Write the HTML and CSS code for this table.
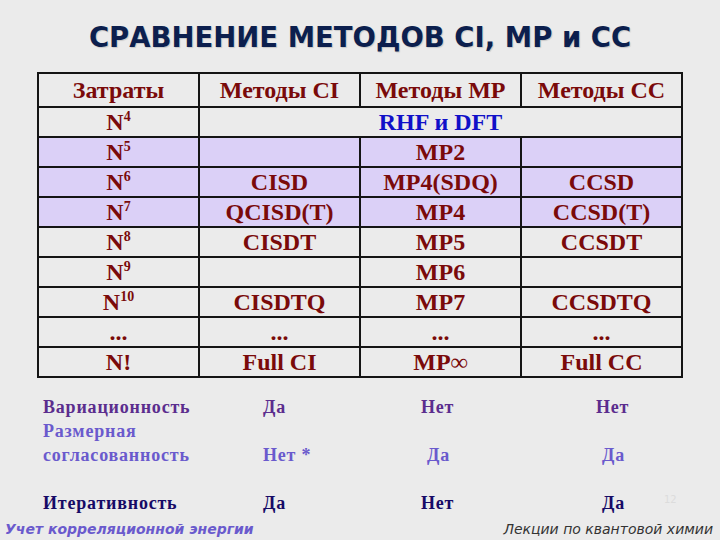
FILE: index.html
```html
<!DOCTYPE html>
<html lang="ru">
<head>
<meta charset="utf-8">
<link rel="stylesheet" href="styles.css">
</head>
<body>
<div class="slide">
  <h1 class="title">СРАВНЕНИЕ МЕТОДОВ CI, MP и CC</h1>
  <table class="cmp">
    <tr class="head">
      <td>Затраты</td><td>Методы CI</td><td>Методы MP</td><td>Методы CC</td>
    </tr>
    <tr>
      <td>N<sup>4</sup></td><td colspan="3" class="blue">RHF и DFT</td>
    </tr>
    <tr class="hl">
      <td>N<sup>5</sup></td><td></td><td>MP2</td><td></td>
    </tr>
    <tr class="hl">
      <td>N<sup>6</sup></td><td>CISD</td><td>MP4(SDQ)</td><td>CCSD</td>
    </tr>
    <tr class="hl">
      <td>N<sup>7</sup></td><td>QCISD(T)</td><td>MP4</td><td>CCSD(T)</td>
    </tr>
    <tr>
      <td>N<sup>8</sup></td><td>CISDT</td><td>MP5</td><td>CCSDT</td>
    </tr>
    <tr>
      <td>N<sup>9</sup></td><td></td><td>MP6</td><td></td>
    </tr>
    <tr>
      <td>N<sup>10</sup></td><td>CISDTQ</td><td>MP7</td><td>CCSDTQ</td>
    </tr>
    <tr>
      <td>...</td><td>...</td><td>...</td><td>...</td>
    </tr>
    <tr>
      <td>N!</td><td>Full CI</td><td>MP∞</td><td>Full CC</td>
    </tr>
  </table>

  <div class="props">
    <div class="prop r1">
      <div class="lbl">Вариационность</div>
      <div class="v">Да</div>
      <div class="v">Нет</div>
      <div class="v">Нет</div>
    </div>
    <div class="prop r2">
      <div class="lbl">Размерная<br>согласованность</div>
      <div class="v">Нет *</div>
      <div class="v s">Да</div>
      <div class="v s">Да</div>
    </div>
    <div class="prop r3">
      <div class="lbl">Итеративность</div>
      <div class="v">Да</div>
      <div class="v">Нет</div>
      <div class="v s">Да</div>
    </div>
  </div>

  <div class="footer">
    <span class="fl">Учет корреляционной энергии</span>
    <span class="fr">Лекции по квантовой химии</span>
  </div>
  <span class="pnum">12</span>
</div>
</body>
</html>
```

FILE: styles.css
```css
html, body {
  margin: 0;
  padding: 0;
  background: #ebebeb;
}
.slide {
  position: relative;
  width: 720px;
  height: 540px;
  overflow: hidden;
}
.title {
  margin: 0;
  height: 72px;
  line-height: 74px;
  text-align: center;
  font-family: "DejaVu Sans", sans-serif;
  font-weight: bold;
  font-size: 27.5px;
  color: #0c1f4e;
  text-shadow: 1px 1px 1px rgba(0,0,0,0.15);
}
.cmp {
  margin-left: 37px;
  width: 646px;
  border-collapse: collapse;
  table-layout: fixed;
  font-family: "Liberation Serif", "Times New Roman", serif;
  font-weight: bold;
  font-size: 24px;
  color: #7a0a0a;
}
.cmp td {
  border: 2px solid #141414;
  text-align: center;
  vertical-align: middle;
  height: 28px;
  padding: 0;
  line-height: 26px;
}
.cmp tr.head td {
  height: 32px;
}
.cmp tr.hl td {
  background: #dbd0f7;
}
.cmp sup {
  font-size: 14px;
  line-height: 0;
  vertical-align: 9px;
}
.cmp .blue {
  color: #1010c8;
}
.props {
  margin-top: 17px;
  padding-left: 43px;
  font-family: "Liberation Serif", "Times New Roman", serif;
  font-weight: bold;
  font-size: 18px;
  letter-spacing: 0.8px;
}
.prop {
  display: grid;
  grid-template-columns: 220px 158px 175px 100px;
  align-items: end;
  line-height: 24px;
}
.r1 { color: #5b2d8e; }
.r2 { color: #6a5acd; }
.r3 { color: #160a66; margin-top: 24px; }
.v.s { padding-left: 6px; }
.footer {
  position: absolute;
  left: 0;
  right: 0;
  bottom: 0;
  height: 22px;
  display: flex;
  justify-content: space-between;
  align-items: center;
  padding: 0 7px 0 5px;
  font-family: "DejaVu Sans", sans-serif;
  font-style: italic;
  font-size: 14px;
}
.fl {
  color: #6a5acd;
  font-weight: bold;
}
.fr {
  color: #333;
}
.pnum {
  position: absolute;
  left: 664px;
  top: 494px;
  font-family: "DejaVu Sans", sans-serif;
  font-size: 10px;
  color: #dcdcdc;
}
```
